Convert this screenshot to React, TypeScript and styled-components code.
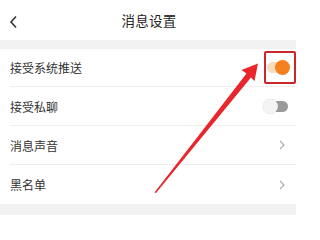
import styled, { createGlobalStyle } from 'styled-components'

const GlobalStyle = createGlobalStyle`
  html, body {
    margin: 0;
    padding: 0;
    background: #ffffff;
  }
  body {
    font-family: "Noto Sans CJK SC", "Noto Sans", sans-serif;
    color: #333333;
  }
`

const Screen = styled.div`
  position: relative;
  width: 296px;
  height: 215px;
  background: #ffffff;
  overflow: hidden;
`

const Header = styled.header`
  position: relative;
  display: flex;
  align-items: center;
  justify-content: center;
  height: 40px;
  font-size: 13.5px;
  color: #222222;
`

const BackBtn = styled.div`
  position: absolute;
  left: 9px;
  top: 15px;
  width: 10px;
  height: 14px;
  display: flex;
`

const Title = styled.div`
  letter-spacing: 0.2px;
  margin-left: 2px;
`

const Gap = styled.div<{ h: number }>`
  height: ${(p) => p.h}px;
  background: #f2f2f2;
`

const List = styled.div`
  display: flex;
  flex-direction: column;
  padding-left: 10px;
`

const Row = styled.div<{ last?: boolean; h: number }>`
  display: flex;
  align-items: center;
  justify-content: space-between;
  height: ${(p) => p.h}px;
  padding-right: 7px;
  border-bottom: ${(p) => (p.last ? 'none' : '1px solid #eeeeee')};
  font-size: 12px;
  color: #333333;
`

const Label = styled.span`
  line-height: 1;
  margin-top: 1px;
`

const Switch = styled.div<{ on?: boolean }>`
  position: relative;
  width: 22px;
  height: 11px;
  border-radius: 6px;
  margin-right: ${(p) => (p.on ? '0' : '1px')};
  background: ${(p) => (p.on ? '#f8dcc0' : '#9a9a9a')};
`

const Knob = styled.div<{ on?: boolean }>`
  position: absolute;
  top: -2px;
  ${(p) => (p.on ? 'right: -1px;' : 'left: -3px;')}
  width: 15px;
  height: 15px;
  border-radius: 50%;
  background: ${(p) => (p.on ? '#f5801e' : '#f4f4f4')};
  box-shadow: ${(p) => (p.on ? 'none' : '0 0 1px rgba(0,0,0,0.25)')};
`

const HighlightBox = styled.div`
  position: absolute;
  left: 264px;
  top: 51px;
  width: 28px;
  height: 29px;
  border: 2px solid #c8282c;
  border-radius: 2px;
`

const Arrow = styled.svg`
  position: absolute;
  left: 0;
  top: 0;
  pointer-events: none;
`

const Chevron = () => (
  <svg width="6" height="10" viewBox="0 0 6 10" style={{ marginRight: 4 }}>
    <path d="M1 1 L5 5 L1 9" fill="none" stroke="#aaaaaa" strokeWidth="1.1" />
  </svg>
)

const rows = [
  { label: '接受系统推送', kind: 'on', h: 37 },
  { label: '接受私聊', kind: 'off', h: 38 },
  { label: '消息声音', kind: 'link', h: 38 },
  { label: '黑名单', kind: 'link', h: 39 },
]

export default function App() {
  return (
    <>
      <GlobalStyle />
      <Screen>
        <Header>
          <BackBtn>
            <svg width="10" height="14" viewBox="0 0 10 14">
              <path d="M7 1.5 L2 7 L7 12.5" fill="none" stroke="#333" strokeWidth="1.6" />
            </svg>
          </BackBtn>
          <Title>消息设置</Title>
        </Header>
        <Gap h={9} />
        <List>
          {rows.map((r, i) => (
            <Row key={r.label} h={r.h} last={i === rows.length - 1}>
              <Label>{r.label}</Label>
              {r.kind === 'link' ? (
                <Chevron />
              ) : (
                <Switch on={r.kind === 'on'}>
                  <Knob on={r.kind === 'on'} />
                </Switch>
              )}
            </Row>
          ))}
        </List>
        <Gap h={20} />
        <HighlightBox />
        <Arrow width="296" height="215" viewBox="0 0 296 215">
          <path
            d="M154.5 192.5 L246.5 73.5 L241.5 70 L258 63.5 L254.5 81 L251 77.5 L156 193 Z"
            fill="#e8262c"
          />
        </Arrow>
      </Screen>
    </>
  )
}
